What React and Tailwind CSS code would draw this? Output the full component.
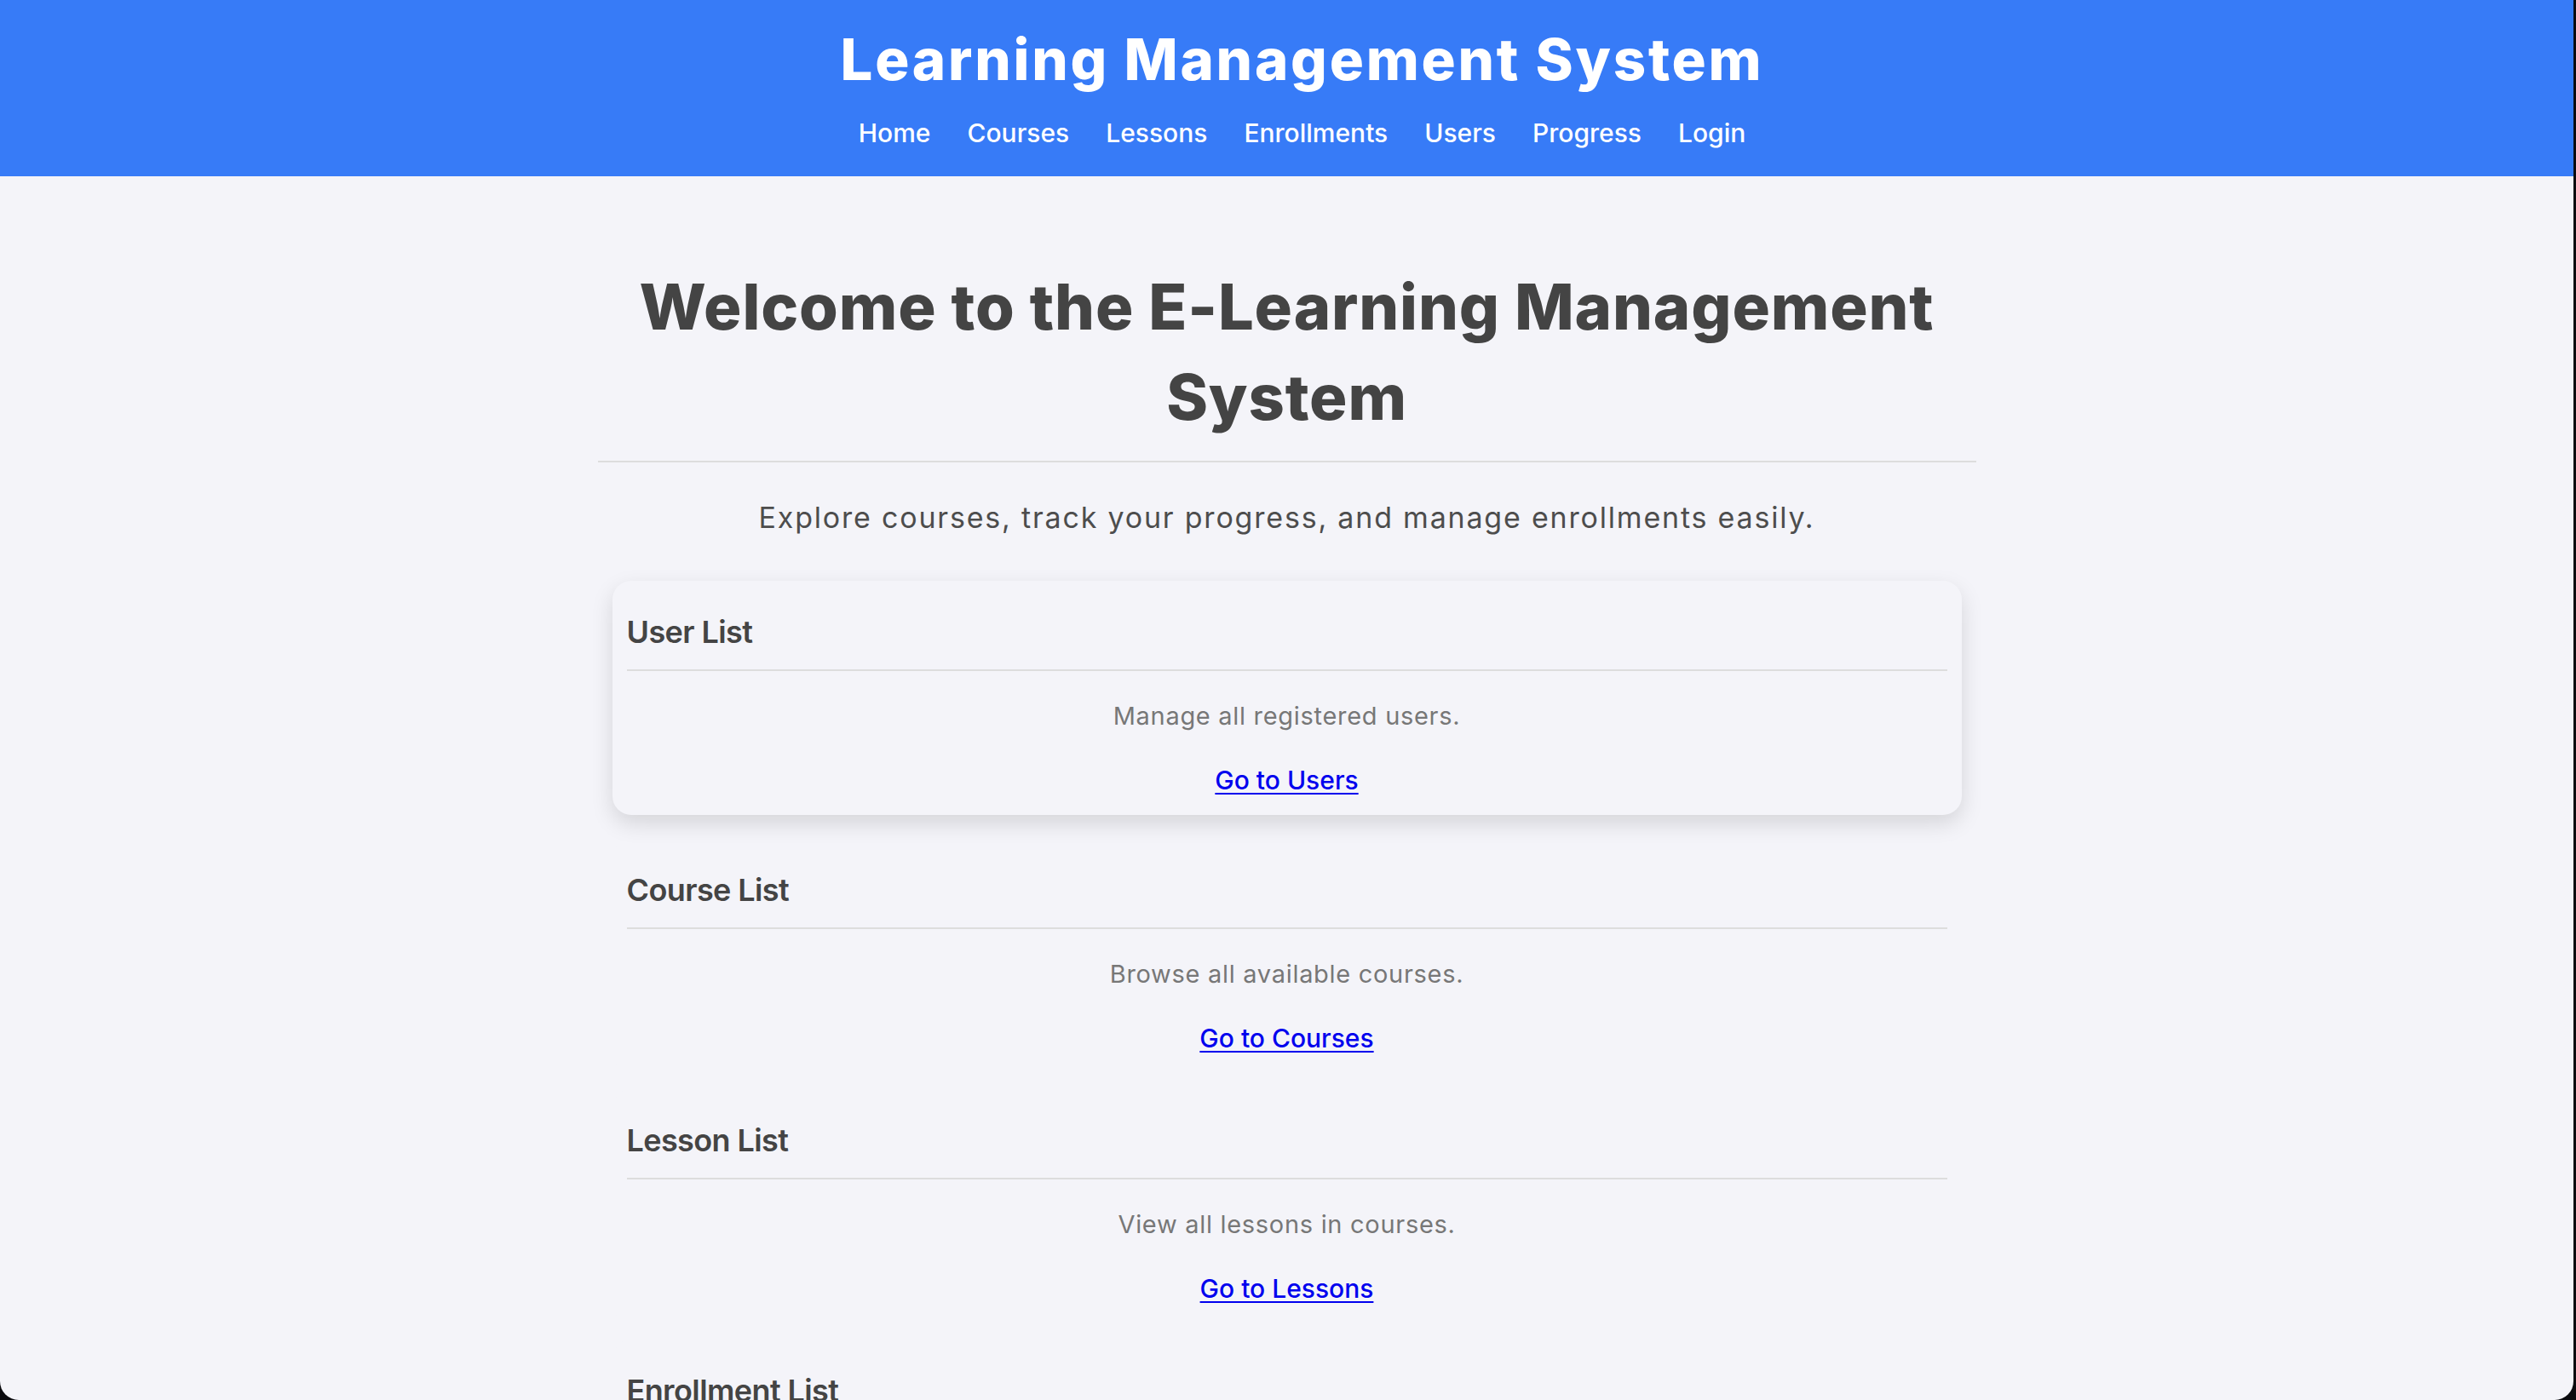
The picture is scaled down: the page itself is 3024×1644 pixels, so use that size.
const navLinks = ["Home", "Courses", "Lessons", "Enrollments", "Users", "Progress", "Login"];

const sections = [
  { title: "User List", text: "Manage all registered users.", link: "Go to Users", hover: true },
  { title: "Course List", text: "Browse all available courses.", link: "Go to Courses" },
  { title: "Lesson List", text: "View all lessons in courses.", link: "Go to Lessons" },
  { title: "Enrollment List", text: "Manage course enrollments.", link: "Go to Enrollments" },
];

const SectionCard = ({ title, text, link, hover }) => {
  return (
    <div
      className={
        hover
          ? "mx-[17px] mb-[19px] px-[17px] pt-[17px] pb-[23px] rounded-[22px] bg-[#f4f4f9] -translate-y-[9px] shadow-[0_10px_26px_rgba(0,0,0,0.13)]"
          : "mx-[17px] mb-[19px] px-[17px] pt-[17px] pb-[23px] rounded-[22px] bg-[#f4f4f9]"
      }
    >
      <h3 className="mt-[20px] text-[36px] leading-[46px] font-semibold tracking-[-0.6px] text-[#444]">{title}</h3>
      <div className="mt-[21px] h-[2px] bg-[#dddddd]" />
      <p className="mt-[31px] text-center text-[29px] leading-[44px] tracking-[0.7px] text-[#777]">{text}</p>
      <p className="mt-[35px] text-center text-[30px] leading-[36px] font-medium">
        <a href="#" className="text-[#0000ee] underline underline-offset-[4px] decoration-[2px]">
          {link}
        </a>
      </p>
    </div>
  );
};

export default function App() {
  return (
    <div className="bg-[#0b0b0f] h-[1644px] pr-[3px] font-['Inter',sans-serif]">
      <div className="h-full bg-[#f4f4f9] rounded-b-[22px] overflow-hidden">
        {/* Header */}
        <header className="bg-[#377bf7] pl-[36px] pt-[29px] pb-[33px] flex flex-col items-center text-white">
          <h1 className="text-[67px] leading-[81px] font-extrabold tracking-[2.75px]">Learning Management System</h1>
          <nav className="mt-[28px] flex gap-[43px] text-[30px] leading-[36px] font-medium">
            {navLinks.map(n => (
              <a key={n} href="#">
                {n}
              </a>
            ))}
          </nav>
        </header>

        {/* Main */}
        <main className="w-[1618px] mx-auto">
          <h1 className="mt-[100px] text-center text-[74px] leading-[106px] font-extrabold tracking-[0.85px] text-[#444]">
            Welcome to the E-Learning Management
            <br />
            System
          </h1>
          <div className="mt-[22px] h-[2px] bg-[#dddddd]" />
          <p className="mt-[39px] mb-[58px] text-center text-[34px] leading-[51px] tracking-[1.8px] text-[#4d4d4d]">
            Explore courses, track your progress, and manage enrollments easily.
          </p>
          {sections.map(s => (
            <SectionCard key={s.title} {...s} />
          ))}
        </main>
      </div>
    </div>
  );
}
